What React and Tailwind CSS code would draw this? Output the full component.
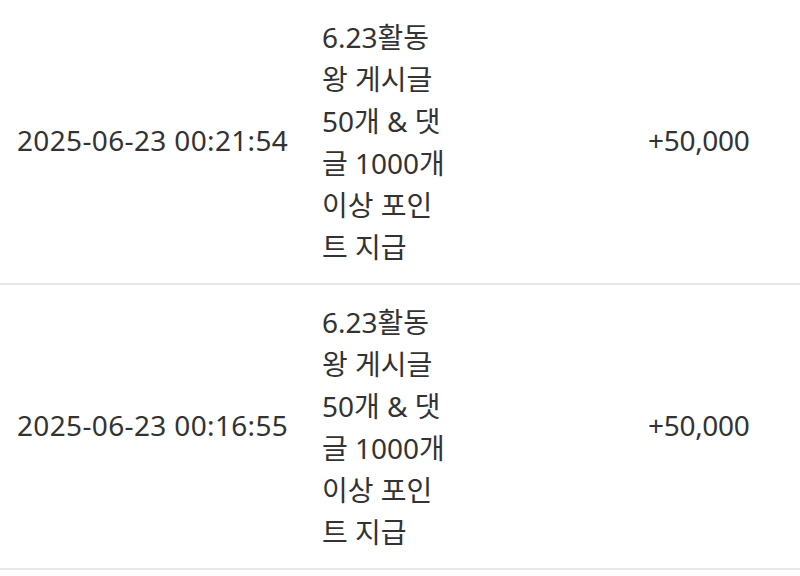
import React from 'react';

const rows = [
  {
    date: '2025-06-23 00:21:54',
    lines: ['6.23활동', '왕 게시글', '50개 & 댓', '글 1000개', '이상 포인', '트 지급'],
    amount: '+50,000',
  },
  {
    date: '2025-06-23 00:16:55',
    lines: ['6.23활동', '왕 게시글', '50개 & 댓', '글 1000개', '이상 포인', '트 지급'],
    amount: '+50,000',
  },
];

const App = () => {
  return (
    <div
      className="w-[800px] bg-white text-[#333333] text-[28px] leading-[42px]"
      style={{ fontFamily: '"Noto Sans", "Noto Sans CJK KR", sans-serif' }}
    >
      {rows.map((row, i) => (
        <div key={i} className="flex items-center border-b-2 border-[#e8e8e8] pt-4 pb-[15px]">
          <div className="w-[305px] pl-[17px] mb-1 whitespace-nowrap tracking-[0.35px]">{row.date}</div>
          <div className="w-[326px] pl-[17px]">
            {row.lines.map((line, j) => (
              <div key={j} className="whitespace-nowrap">
                {line}
              </div>
            ))}
          </div>
          <div className="pl-[17px] mb-1 whitespace-nowrap tracking-[-0.3px]">{row.amount}</div>
        </div>
      ))}
    </div>
  );
};

export default App;
